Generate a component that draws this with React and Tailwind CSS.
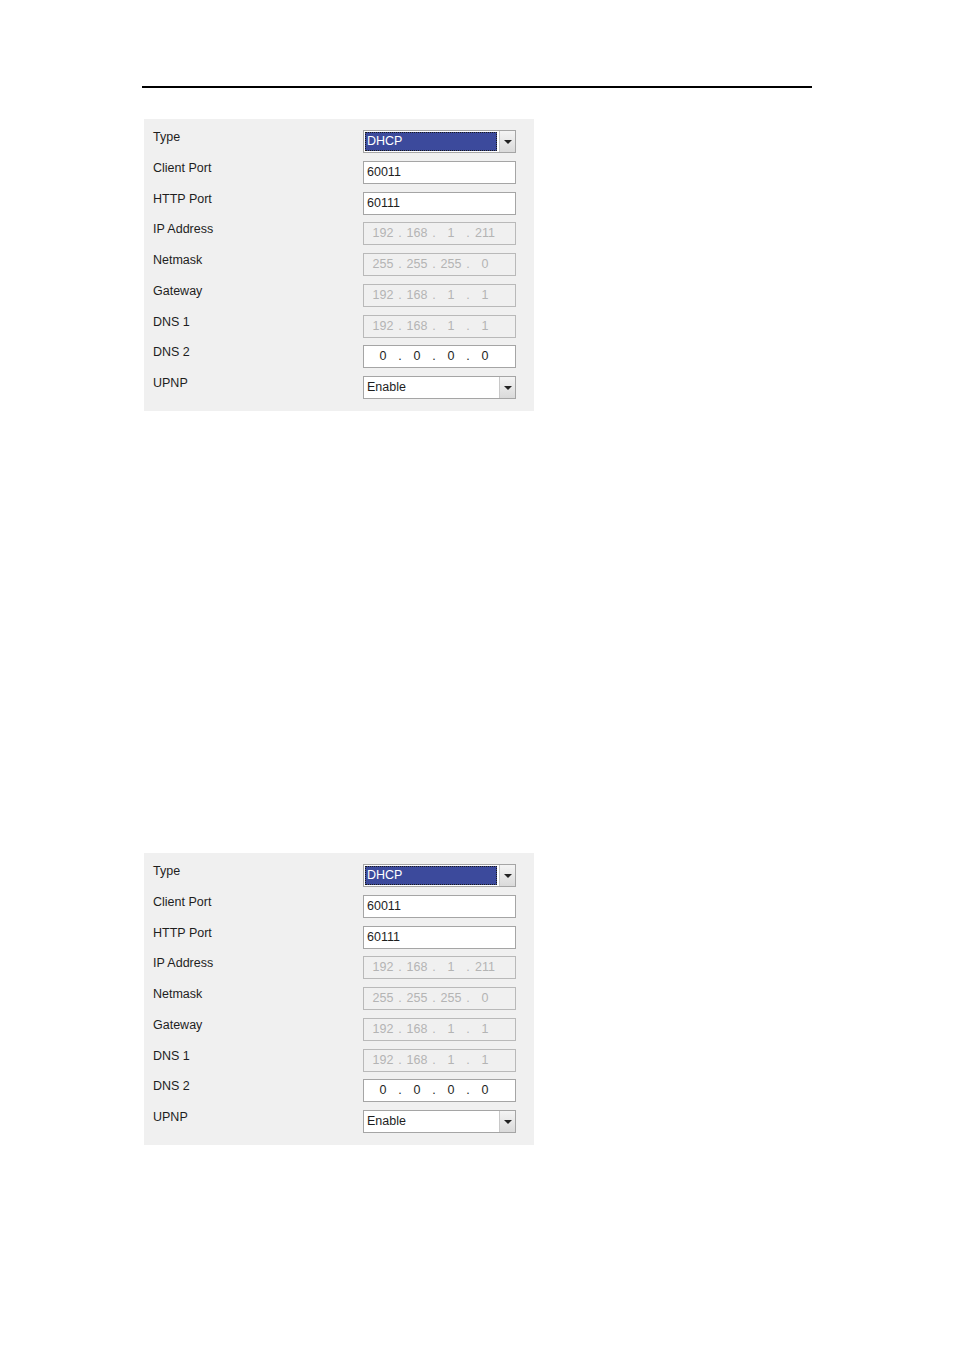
const rows = [
  { label: 'Type', kind: 'select', value: 'DHCP', active: true },
  { label: 'Client Port', kind: 'text', value: '60011' },
  { label: 'HTTP Port', kind: 'text', value: '60111' },
  { label: 'IP Address', kind: 'ip', value: ['192', '168', '1', '211'], disabled: true },
  { label: 'Netmask', kind: 'ip', value: ['255', '255', '255', '0'], disabled: true },
  { label: 'Gateway', kind: 'ip', value: ['192', '168', '1', '1'], disabled: true },
  { label: 'DNS 1', kind: 'ip', value: ['192', '168', '1', '1'], disabled: true },
  { label: 'DNS 2', kind: 'ip', value: ['0', '0', '0', '0'] },
  { label: 'UPNP', kind: 'select', value: 'Enable' },
]

export default function App() {
  return (
    <div className="min-h-[1351px] bg-white pl-[142px] pt-[86px]" style={{ fontFamily: '"Liberation Sans", Arial, sans-serif' }}>
      <div className="h-[2px] w-[670px] bg-black" />
      <div className="ml-[2px] mt-[31px]">
        <NetworkPanel />
      </div>
      <div className="ml-[2px] mt-[442px]">
        <NetworkPanel />
      </div>
    </div>
  )
}

function NetworkPanel() {
  return (
    <div className="flex w-[390px] flex-col gap-[7.75px] bg-[#f0f0f0] pb-[12px] pl-[9px] pt-[11px]">
      {rows.map((r) => (
        <div key={r.label} className="flex h-[23px] items-start">
          <div className="w-[210px] text-[12.5px] leading-[14px] text-[#1e1e1e]">{r.label}</div>
          <Control row={r} />
        </div>
      ))}
    </div>
  )
}

function Control({ row }) {
  if (row.kind === 'select') {
    return (
      <div className="flex h-[23px] w-[153px] border border-[#a5a5a5] bg-white">
        <div className="flex flex-1 p-[1px] pr-[2px]">
          {row.active ? (
            <div className="flex flex-1 items-center border border-dotted border-[#1a1a1a] bg-[#3c4a9c] pl-[1px] text-[12.5px] text-white">
              {row.value}
            </div>
          ) : (
            <div className="flex flex-1 items-center pl-[2px] text-[12.5px] text-[#1e1e1e]">{row.value}</div>
          )}
        </div>
        <div className="flex w-[16px] items-center justify-center border-l border-[#c8c8c8] bg-gradient-to-b from-[#f4f4f4] to-[#dadada]">
          <div className="h-0 w-0 border-x-[4px] border-t-[4px] border-x-transparent border-t-[#222]" />
        </div>
      </div>
    )
  }

  if (row.kind === 'text') {
    return (
      <div className="flex h-[23px] w-[153px] items-center border border-[#a5a5a5] bg-white pl-[3px] text-[12.5px] text-[#1e1e1e]">
        {row.value}
      </div>
    )
  }

  const color = row.disabled ? 'text-[#b4b4b4]' : 'text-[#1e1e1e]'
  return (
    <div
      className={`flex h-[23px] w-[153px] items-center border pl-[6px] text-[12.5px] ${
        row.disabled ? 'border-[#b9b9b9] bg-[#f0f0f0]' : 'border-[#a5a5a5] bg-white'
      } ${color}`}
    >
      {row.value.map((seg, i) => (
        <div key={i} className="flex">
          <span className="w-[26px] text-center">{seg}</span>
          {i < 3 && <span className="w-[8px] text-center">.</span>}
        </div>
      ))}
    </div>
  )
}
